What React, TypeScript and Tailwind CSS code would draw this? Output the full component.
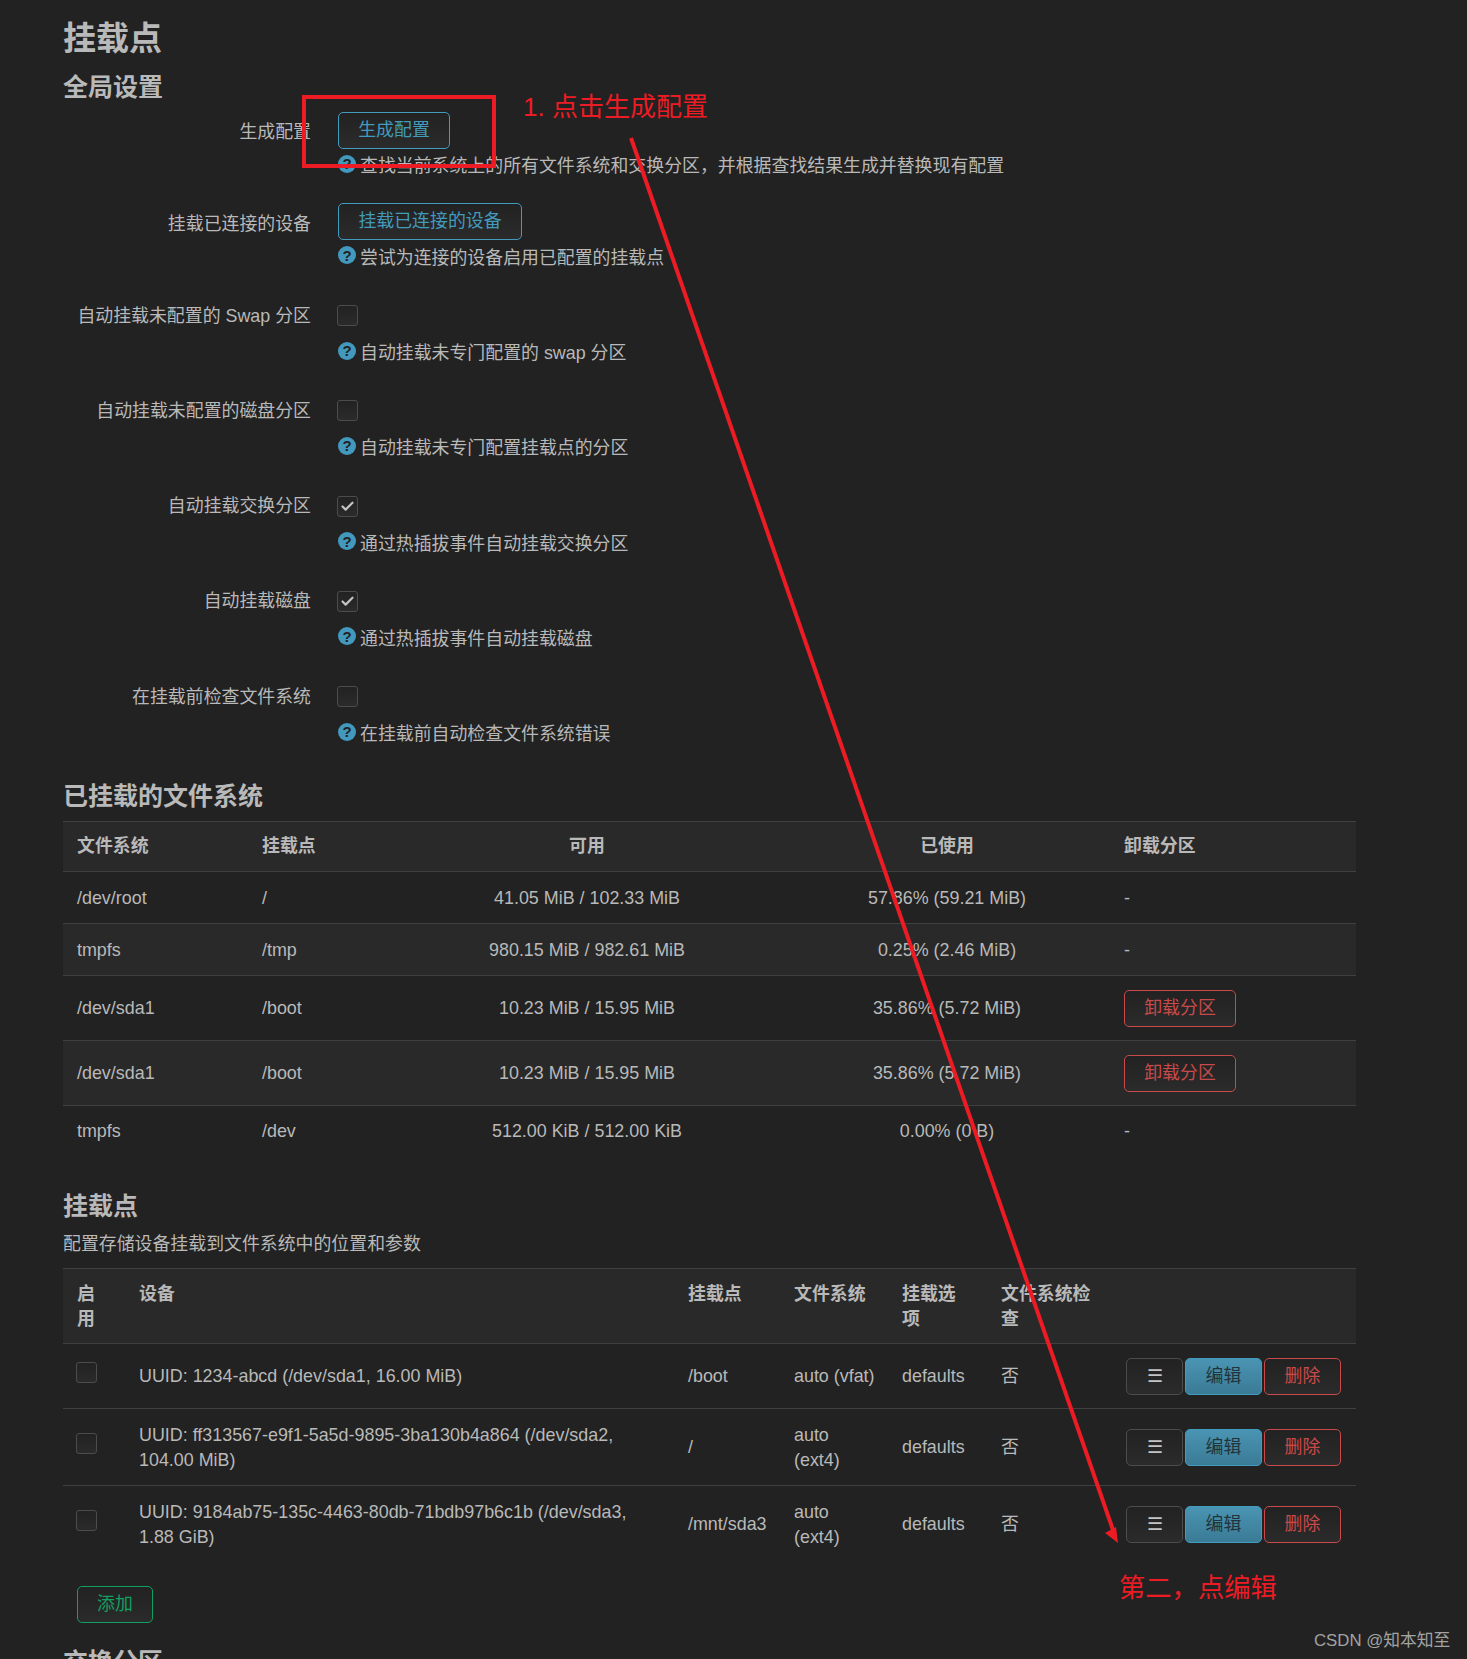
import { Check } from "lucide-react";
import type { ReactNode } from "react";

const globalRows = [
  { label: "自动挂载未配置的 Swap 分区", checked: false, help: "自动挂载未专门配置的 swap 分区" },
  { label: "自动挂载未配置的磁盘分区", checked: false, help: "自动挂载未专门配置挂载点的分区" },
  { label: "自动挂载交换分区", checked: true, help: "通过热插拔事件自动挂载交换分区" },
  { label: "自动挂载磁盘", checked: true, help: "通过热插拔事件自动挂载磁盘" },
  { label: "在挂载前检查文件系统", checked: false, help: "在挂载前自动检查文件系统错误" },
];

const mounted = [
  { fs: "/dev/root", point: "/", free: "41.05 MiB / 102.33 MiB", used: "57.86% (59.21 MiB)", action: false },
  { fs: "tmpfs", point: "/tmp", free: "980.15 MiB / 982.61 MiB", used: "0.25% (2.46 MiB)", action: false },
  { fs: "/dev/sda1", point: "/boot", free: "10.23 MiB / 15.95 MiB", used: "35.86% (5.72 MiB)", action: true },
  { fs: "/dev/sda1", point: "/boot", free: "10.23 MiB / 15.95 MiB", used: "35.86% (5.72 MiB)", action: true },
  { fs: "tmpfs", point: "/dev", free: "512.00 KiB / 512.00 KiB", used: "0.00% (0 B)", action: false },
];

const mountPoints = [
  { device: ["UUID: 1234-abcd (/dev/sda1, 16.00 MiB)"], point: "/boot", fs: ["auto (vfat)"] },
  { device: ["UUID: ff313567-e9f1-5a5d-9895-3ba130b4a864 (/dev/sda2,", "104.00 MiB)"], point: "/", fs: ["auto", "(ext4)"] },
  { device: ["UUID: 9184ab75-135c-4463-80db-71bdb97b6c1b (/dev/sda3,", "1.88 GiB)"], point: "/mnt/sda3", fs: ["auto", "(ext4)"] },
];

function Help({ children, className }: { children: ReactNode; className: string }) {
  return (
    <div className={`flex items-center gap-[4px] ${className}`}>
      <span className="-mt-[6px] flex h-[18px] w-[18px] items-center justify-center rounded-full bg-[#4299bd] text-[15px] font-bold text-[#222222]">
        ?
      </span>
      <span>{children}</span>
    </div>
  );
}

function Row({ label, labelClass = "pt-[6px]", children }: { label: string; labelClass?: string; children: ReactNode }) {
  return (
    <div className="flex">
      <div className={`h-[37px] w-[248px] text-right leading-[25px] ${labelClass}`}>{label}</div>
      <div className="ml-[27px]">{children}</div>
    </div>
  );
}

function Button({ children, className }: { children: ReactNode; className: string }) {
  return (
    <button className={`flex h-[37px] items-center justify-center rounded-[5px] border bg-gradient-to-b from-[#222222] to-[#2b2b2b] ${className}`}>
      {children}
    </button>
  );
}

function Checkbox({ checked, className = "" }: { checked?: boolean; className?: string }) {
  return (
    <span className={`flex h-[21px] w-[21px] items-center justify-center rounded-[3px] border border-[#4c4c4c] bg-gradient-to-b from-[#222222] to-[#2b2b2b] ${className}`}>
      {checked && <Check size={15} strokeWidth={3.5} className="text-[#c4c4c4]" />}
    </span>
  );
}

export default function App() {
  return (
    <div className="relative h-[1659px] overflow-hidden bg-[#222222] pl-[63px] pr-[111px] pt-[19px] text-[17.9px] leading-[25px] text-[#b9b9b9] [font-family:'Liberation_Sans','Noto_Sans_CJK_SC',sans-serif]">
      <h1 className="h-[40px] text-[33px] font-bold leading-[40px] text-[#b9b9b9]">挂载点</h1>
      <h2 className="mt-[13px] h-[30px] text-[25px] font-bold leading-[30px]">全局设置</h2>

      {/* 全局设置 */}
      <div className="mt-[10px] flex flex-col gap-[22.25px]">
        <Row label="生成配置" labelClass="pt-[8px]">
          <Button className="w-[112px] border-[#429abd] text-[#429abd]">生成配置</Button>
          <Help className="h-[32px] pt-[3px]">查找当前系统上的所有文件系统和交换分区，并根据查找结果生成并替换现有配置</Help>
        </Row>
        <Row label="挂载已连接的设备" labelClass="pt-[9px]">
          <Button className="w-[184px] border-[#429abd] text-[#429abd]">挂载已连接的设备</Button>
          <Help className="h-[35px] pt-[1px]">尝试为连接的设备启用已配置的挂载点</Help>
        </Row>
        {globalRows.map((row) => (
          <Row key={row.label} label={row.label}>
            <div className="-ml-[1px] flex h-[36px] items-center">
              <Checkbox checked={row.checked} />
            </div>
            <Help className="h-[37px] pt-[3px]">{row.help}</Help>
          </Row>
        ))}
      </div>

      {/* 已挂载的文件系统 */}
      <h2 className="mt-[29px] h-[30px] text-[25px] font-bold leading-[30px]">已挂载的文件系统</h2>
      <table className="mt-[10px] w-[1293px] table-fixed border-collapse">
        <colgroup>
          <col className="w-[185px]" />
          <col className="w-[141px]" />
          <col className="w-[396px]" />
          <col className="w-[324px]" />
          <col className="w-[247px]" />
        </colgroup>
        <thead>
          <tr className="h-[50px] border-y border-[#404040] bg-[#292929] font-bold">
            <th className="px-[14px] text-left">文件系统</th>
            <th className="px-[14px] text-left">挂载点</th>
            <th className="px-[14px] text-center">可用</th>
            <th className="px-[14px] text-center">已使用</th>
            <th className="pl-[15px] pr-[13px] text-left">卸载分区</th>
          </tr>
        </thead>
        <tbody>
          {mounted.map((row, i) => (
            <tr
              key={i}
              className={`${row.action ? "h-[65px]" : "h-[52px]"} ${i % 2 === 1 ? "bg-[#292929]" : ""} ${i < 4 ? "border-b border-[#404040]" : ""} ${i !== 4 ? "[&>td]:pt-[2px]" : ""}`}
            >
              <td className="px-[14px]">{row.fs}</td>
              <td className="px-[14px]">{row.point}</td>
              <td className="px-[14px] text-center">{row.free}</td>
              <td className="px-[14px] text-center">{row.used}</td>
              <td className="pl-[15px] pr-[13px]">
                {row.action ? (
                  <Button className="w-[112px] border-[#c84a4a] text-[#c84a4a]">卸载分区</Button>
                ) : (
                  "-"
                )}
              </td>
            </tr>
          ))}
        </tbody>
      </table>

      {/* 挂载点 */}
      <h2 className="mt-[34px] h-[30px] text-[25px] font-bold leading-[30px]">挂载点</h2>
      <p className="mt-[11px] h-[25px]">配置存储设备挂载到文件系统中的位置和参数</p>
      <table className="mt-[11px] w-[1293px] table-fixed border-collapse">
        <colgroup>
          <col className="w-[62px]" />
          <col className="w-[549px]" />
          <col className="w-[106px]" />
          <col className="w-[108px]" />
          <col className="w-[99px]" />
          <col className="w-[125px]" />
          <col className="w-[244px]" />
        </colgroup>
        <thead>
          <tr className="h-[75px] border-y border-[#404040] bg-[#292929] text-left align-top font-bold">
            <th className="px-[14px] pt-[13px]">启<br />用</th>
            <th className="px-[14px] pt-[13px]">设备</th>
            <th className="px-[14px] pt-[13px]">挂载点</th>
            <th className="px-[14px] pt-[13px]">文件系统</th>
            <th className="whitespace-nowrap px-[14px] pt-[13px]">挂载选<br />项</th>
            <th className="whitespace-nowrap px-[14px] pt-[13px]">文件系统检<br />查</th>
            <th />
          </tr>
        </thead>
        <tbody>
          {mountPoints.map((row, i) => (
            <tr key={row.point} className={`[&>td]:pt-[1px] ${i === 0 ? "h-[65px]" : "h-[77px]"} ${i < 2 ? "border-b border-[#404040]" : ""}`}>
              <td className="px-[14px]">
                <Checkbox className="-ml-[1px] -mt-[8px]" />
              </td>
              <td className="whitespace-nowrap px-[14px]">
                {row.device.map((line) => (
                  <div key={line}>{line}</div>
                ))}
              </td>
              <td className="px-[14px]">{row.point}</td>
              <td className="whitespace-nowrap px-[14px]">
                {row.fs.map((line) => (
                  <div key={line}>{line}</div>
                ))}
              </td>
              <td className="px-[14px]">defaults</td>
              <td className="px-[14px]">否</td>
              <td className="pl-[14px]">
                <div className="flex gap-[2px]">
                  <Button className="w-[57px] border-[#4c4c4c] text-[#c4c4c4]">☰</Button>
                  <button className="flex h-[37px] w-[77px] items-center justify-center rounded-[5px] border border-[#429abd] bg-gradient-to-b from-[#4a94b3] to-[#3a7b95] text-[#21343d]">
                    编辑
                  </button>
                  <Button className="w-[77px] border-[#c84a4a] text-[#c84a4a]">删除</Button>
                </div>
              </td>
            </tr>
          ))}
        </tbody>
      </table>

      <Button className="mt-[23px] ml-[14px] w-[76px] border-[#10a060] text-[#10a060]">添加</Button>
      <h2 className="mt-[24px] h-[30px] text-[25px] font-bold leading-[30px]">交换分区</h2>

      {/* 截图上的标注 */}
      <div className="absolute left-[302px] top-[95px] h-[73px] w-[194px] border-[4px] border-[#ed1c24]" />
      <div className="absolute left-[523px] top-[89px] text-[26px] leading-[36px] text-[#ed1c24]">1. 点击生成配置</div>
      <div className="absolute left-[1119px] top-[1570px] text-[26.3px] leading-[36px] text-[#ed1c24]">第二，点编辑</div>
      <div className="absolute left-[1314px] top-[1629px] whitespace-nowrap text-[16.8px] leading-[24px] text-[#a3a3a3]">CSDN @知本知至</div>
      <svg className="pointer-events-none absolute inset-0 h-full w-full" viewBox="0 0 1467 1659">
        <line x1="631" y1="138" x2="1113" y2="1530" stroke="#ed1c24" strokeWidth="4" />
        <polygon points="1118,1543 1105,1533 1116,1527" fill="#ed1c24" />
      </svg>
    </div>
  );
}
